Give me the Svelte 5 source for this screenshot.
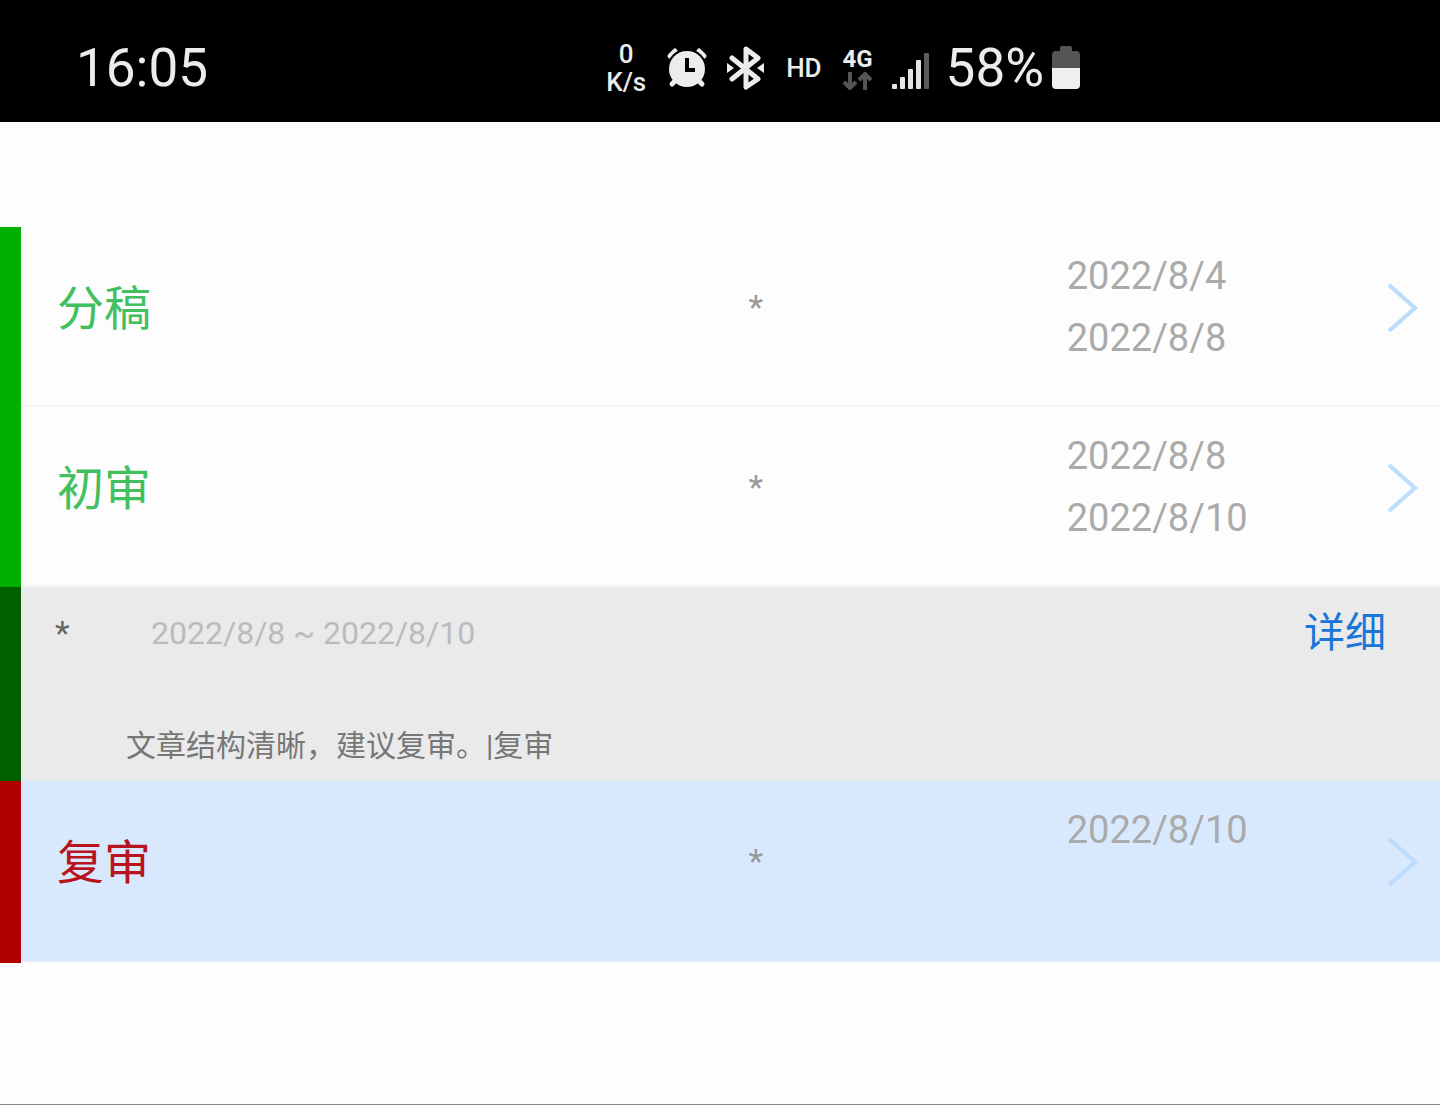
<script>
    const stages = [
        {
            name: '分稿',
            state: 'done',
            person: '*',
            dates: ['2022/8/4', '2022/8/8'],
            notes: []
        },
        {
            name: '初审',
            state: 'done',
            person: '*',
            dates: ['2022/8/8', '2022/8/10'],
            notes: [
                { person: '*', period: '2022/8/8 ~ 2022/8/10', text: '文章结构清晰，建议复审。|复审' }
            ]
        },
        {
            name: '复审',
            state: 'current',
            person: '*',
            dates: ['2022/8/10'],
            notes: []
        }
    ];
</script>

<div class="screen">
    <header class="status">
        <time class="clock">16:05</time>
        <div class="indicators">
            <div class="speed">
                <span>0</span>
                <span>K/s</span>
            </div>
            <svg class="alarm" width="42" height="42" viewBox="0 0 42 42" aria-hidden="true">
                <path d="M4 9 L9 4 M38 9 L33 4" stroke="#ececec" stroke-width="5" stroke-linecap="round" />
                <circle cx="21" cy="22" r="20" fill="#000" />
                <path d="M9 34 L6 37 M33 34 L36 37" stroke="#ececec" stroke-width="5" stroke-linecap="round" />
                <circle cx="21" cy="22" r="18" fill="#ececec" />
                <path d="M21 11 V23 H29" fill="none" stroke="#000" stroke-width="4" />
            </svg>
            <svg class="bluetooth" width="38" height="44" viewBox="0 0 38 44" aria-hidden="true">
                <path d="M6 12 L32 33 L20 41 V3 L32 12 L6 33" fill="none" stroke="#ececec" stroke-width="5" stroke-linejoin="round" stroke-linecap="round" />
                <path d="M1 17 L8 22 L1 27 Z M38 17 L31 22 L38 27 Z" fill="#ececec" />
            </svg>
            <span class="hd">HD</span>
            <div class="network">
                <span>4G</span>
                <svg width="32" height="18" viewBox="0 0 32 18" aria-hidden="true">
                    <path d="M8 0 V16 M2 10 L8 16 L14 10 M23 18 V2 M17 8 L23 2 L29 8" fill="none" stroke="#555" stroke-width="4" />
                </svg>
            </div>
            <svg class="signal" width="38" height="38" viewBox="0 0 38 38" aria-hidden="true">
                <g fill="#e4e4e4">
                    <rect x="0" y="32" width="5" height="5" rx="1" />
                    <rect x="8" y="25" width="5" height="12" rx="1" />
                    <rect x="16" y="17" width="5" height="20" rx="1" />
                    <rect x="24" y="8" width="5" height="29" rx="1" />
                </g>
                <rect x="32" y="1" width="5" height="36" rx="1" fill="#5c5c5c" />
            </svg>
            <span class="percent">58%</span>
            <svg class="battery" width="28" height="43" viewBox="0 0 28 43" aria-hidden="true">
                <path d="M8 5 V2 Q8 0 10 0 H18 Q20 0 20 2 V5 H24 Q28 5 28 9 V22 H0 V9 Q0 5 4 5 Z" fill="#555" />
                <path d="M0 22 H28 V39 Q28 43 24 43 H4 Q0 43 0 39 Z" fill="#efefef" />
            </svg>
        </div>
    </header>

    <main>
        {#each stages as stage}
            <section class="stage {stage.state}">
                <div class="row">
                    <h2>{stage.name}</h2>
                    <span class="person">{stage.person}</span>
                    <div class="dates">
                        {#each stage.dates as date}
                            <time>{date}</time>
                        {/each}
                    </div>
                    <button class="open" aria-label={stage.name}>
                        <svg width="32" height="50" viewBox="0 0 32 50" aria-hidden="true">
                            <path d="M2 3 L28 26 L2 49" fill="none" stroke="currentColor" stroke-width="4" />
                        </svg>
                    </button>
                </div>
                {#each stage.notes as note}
                    <article class="note">
                        <div class="note-head">
                            <span class="author">{note.person}</span>
                            <span class="period">{note.period}</span>
                            <a href="#detail">详细</a>
                        </div>
                        <p>{note.text}</p>
                    </article>
                {/each}
            </section>
        {/each}
    </main>
</div>

<style>
    :global(body) {
        margin: 0;
        background-color: #fdfdfd;
    }

    .screen {
        display: flex;
        flex-direction: column;
        box-sizing: border-box;
        min-height: 100vh;
        border-bottom: 1px solid #888;
        font-family: Roboto, "Noto Sans CJK SC", sans-serif;
    }

    .status {
        display: flex;
        justify-content: space-between;
        align-items: center;
        box-sizing: border-box;
        height: 122px;
        padding: 13px 25% 0 76px;
        background-color: #000;
        color: #ececec;
    }

    .clock, .percent {
        font-size: 53px;
        line-height: 60px;
    }

    .indicators {
        display: flex;
        align-items: center;
    }

    .speed, .network {
        display: flex;
        flex-direction: column;
        align-items: center;
        font-weight: 500;
        font-size: 26px;
        line-height: 28px;
    }

    .alarm {
        margin-left: 20px;
    }

    .bluetooth {
        margin-left: 18px;
    }

    .hd {
        margin-left: 22px;
        font-size: 26px;
        font-weight: 500;
    }

    .network {
        margin-left: 20px;
        font-size: 24px;
        line-height: 26px;
        font-weight: 700;
    }

    .signal {
        margin-left: 18px;
        align-self: flex-end;
        margin-bottom: 8px;
    }

    .percent {
        margin-left: 16px;
    }

    .battery {
        margin-left: 8px;
    }

    main {
        padding-top: 105px;
    }

    /* the divider is an inset shadow so it stops at the coloured bar */
    .row {
        display: grid;
        grid-template-columns: 691fr 318fr 320fr 32px;
        align-items: center;
        padding: 18px 21px 38px 36px;
        border-left: 21px solid #00b000;
        box-shadow: inset 0 -2px #f4f4f4;
    }

    h2 {
        margin: 0;
        padding-top: 4px;
        font-size: 47px;
        font-weight: 400;
        line-height: 60px;
        color: #42c060;
    }

    .person {
        font-size: 34px;
        line-height: 40px;
        color: #999;
    }

    .dates {
        display: flex;
        flex-direction: column;
        min-height: 124px;
        font-size: 38px;
        line-height: 62px;
        color: #aaa;
    }

    .open {
        display: flex;
        padding: 0;
        border: none;
        background: none;
        color: #bbdcfd;
        cursor: pointer;
    }

    .note {
        padding: 16px 54px 14px 34px;
        border-left: 21px solid #006000;
        background-color: #eaeaea;
    }

    .note-head {
        display: flex;
        align-items: center;
        line-height: 60px;
    }

    .author {
        width: 96px;
        font-size: 34px;
        color: #666;
    }

    .period {
        font-size: 32px;
        color: #bbb;
    }

    a {
        margin-left: auto;
        font-size: 41px;
        color: #1a75d8;
        text-decoration: none;
    }

    .note p {
        margin: 62px 0 0 71px;
        font-size: 30px;
        line-height: 42px;
        color: #777;
    }

    .current .row {
        padding-bottom: 40px;
        border-left-color: #b00000;
        background-color: #d8e9fe;
    }

    .current h2 {
        color: #b81420;
    }
</style>
